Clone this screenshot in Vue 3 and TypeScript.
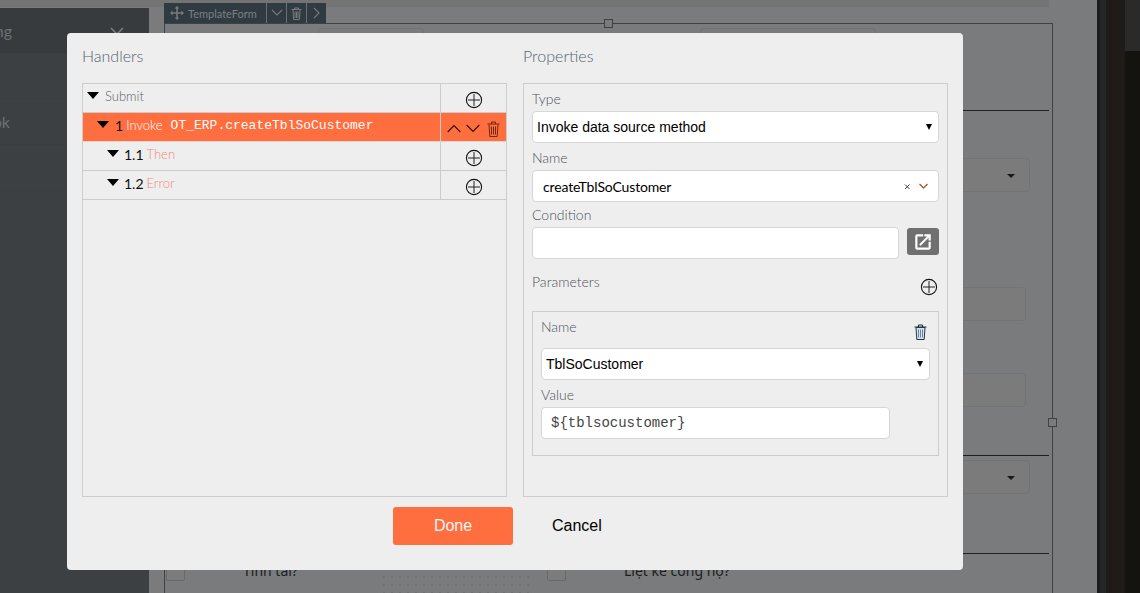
<script setup lang="ts">
interface TreeRow {
  num: string
  label: string
}
const rows: TreeRow[] = [
  { num: '1.1', label: 'Then' },
  { num: '1.2', label: 'Error' }
]
</script>

<template>
  <div class="page">
    <aside class="side">
      <div class="side-head">
        <span class="clip">Setting</span>
        <svg class="side-chev" width="14" height="9" viewBox="0 0 14 9"><path d="M1 1l6 6 6-6" fill="none" stroke="#7a7c7e" stroke-width="1.6" /></svg>
      </div>
      <div class="side-row"></div>
      <div class="side-row"><span class="clip short">Notebook</span></div>
      <div class="side-row"></div>
    </aside>

    <main class="canvas">
      <div class="band"></div>
      <div class="toolbar">
        <svg class="tool-move" width="14" height="14" viewBox="0 0 14 14"><path d="M7 0l2.4 2.6H7.800v3.600h3.600V4.600L14 7l-2.600 2.400V7.800H7.800v3.600h1.600L7 14l-2.400-2.600h1.600V7.800H2.600v1.600L0 7l2.600-2.400v1.600h3.600V2.600H4.600z" fill="#767a7c" /></svg>
        <span class="tool-name">TemplateForm</span>
        <span class="tool-btn"><svg width="12" height="8" viewBox="0 0 12 8"><path d="M1 1l5 5 5-5" fill="none" stroke="#777b7e" stroke-width="1.1" /></svg></span>
        <span class="tool-btn"><svg width="11" height="13" viewBox="0 0 11 13"><path d="M.5 2.500h10M3.500 2.500V1h4v1.500M2 3l.6 9.500h5.800L9 3M4 4.500v6.500M5.500 4.500v6.500M7 4.500v6.500" fill="none" stroke="#777b7e" /></svg></span>
        <span class="tool-btn"><svg width="8" height="12" viewBox="0 0 8 12"><path d="M1 1l5 5-5 5" fill="none" stroke="#777b7e" stroke-width="1.1" /></svg></span>
      </div>
      <div class="frame">
        <span class="handle handle-top"></span>
        <span class="handle handle-right"></span>
        <div class="top-fields">
          <span class="ghost-top first"></span>
          <span class="ghost-top second"></span>
        </div>
        <div class="rule"></div>
        <div class="ghost select-one"><i class="ghost-caret"></i></div>
        <div class="ghost input-one"></div>
        <div class="ghost input-two"></div>
        <div class="rule rule-two"></div>
        <div class="ghost select-two"><i class="ghost-caret"></i></div>
        <div class="rule rule-three"></div>
        <div class="checks">
          <span class="box"></span>
          <span class="check-text first-text">Tính tải?</span>
          <span class="dots"></span>
          <span class="box"></span>
          <span class="check-text">Liệt kê công nợ?</span>
        </div>
      </div>
    </main>

    <aside class="rail">
      <div class="rail-a"></div>
      <div class="rail-b"></div>
      <div class="rail-c"></div>
      <div class="rail-d"><div class="rail-top"></div></div>
    </aside>

    <div class="overlay">
      <section class="modal">
        <div class="columns">
          <div class="column">
            <h2 class="title">Handlers</h2>
            <div class="panel tree">
              <div class="tree-row">
                <div class="tree-main tree-root">
                  <i class="caret"></i>
                  <span class="muted">Submit</span>
                </div>
                <div class="tree-side">
                  <svg class="plus" width="18" height="18" viewBox="0 0 18 18"><circle cx="9" cy="9" r="7.600" fill="none" stroke="#111" stroke-width="1.100" /><path d="M3 9h12M9 3v12" stroke="#222" stroke-width="1" /></svg>
                </div>
              </div>
              <div class="tree-row active">
                <div class="tree-main tree-first">
                  <i class="caret"></i>
                  <span class="num">1</span>
                  <span class="invoke">Invoke</span>
                  <span class="code">OT_ERP.createTblSoCustomer</span>
                </div>
                <div class="tree-side actions">
                  <svg width="14" height="9" viewBox="0 0 14 9"><path d="M.7 8l6.300-6.500L13.300 8" fill="none" stroke="#2a1208" stroke-width="1.100" /></svg>
                  <svg width="14" height="9" viewBox="0 0 14 9"><path d="M.7 1l6.300 6.500L13.300 1" fill="none" stroke="#2a1208" stroke-width="1.100" /></svg>
                  <svg class="row-trash" width="13" height="16" viewBox="0 0 13 16"><path d="M.5 3h12M4.500 3V1h4v2M2 3.500l.8 12h7.400l.8-12M4.500 5.500v8M6.500 5.500v8M8.500 5.500v8" fill="none" stroke="#6d2810" stroke-width="1" /></svg>
                </div>
              </div>
              <div v-for="row in rows" :key="row.num" class="tree-row child">
                <div class="tree-main tree-child">
                  <i class="caret"></i>
                  <span class="num">{{ row.num }}</span>
                  <span class="branch">{{ row.label }}</span>
                </div>
                <div class="tree-side">
                  <svg class="plus" width="18" height="18" viewBox="0 0 18 18"><circle cx="9" cy="9" r="7.600" fill="none" stroke="#111" stroke-width="1.100" /><path d="M3 9h12M9 3v12" stroke="#222" stroke-width="1" /></svg>
                </div>
              </div>
            </div>
          </div>

          <div class="column">
            <h2 class="title">Properties</h2>
            <div class="panel props">
              <label class="label label-type">Type</label>
              <div class="control select">Invoke data source method<i class="mini-caret"></i></div>
              <label class="label label-name">Name</label>
              <div class="control combo">
                <span class="combo-text">createTblSoCustomer</span>
                <svg width="7" height="7" viewBox="0 0 7 7"><path d="M1 1.500l4.500 4.500M5.500 1.500L1 6" stroke="#444" stroke-width="1" /></svg>
                <svg width="9" height="6" viewBox="0 0 9 6"><path d="M.5 1l4 4 4-4" fill="none" stroke="#a0481a" stroke-width="1.100" /></svg>
              </div>
              <label class="label label-cond">Condition</label>
              <div class="condition">
                <div class="control blank"></div>
                <button class="open" type="button" aria-label="Open">
                  <svg width="20" height="20" viewBox="0 0 24 24"><path d="M19 19H5V5h7V3H5a2 2 0 0 0-2 2v14a2 2 0 0 0 2 2h14c1.100 0 2-.9 2-2v-7h-2v7zM14 3v2h3.590l-9.830 9.830 1.410 1.410L19 6.410V10h2V3h-7z" fill="#fff" stroke="#fff" stroke-width=".6" /></svg>
                </button>
              </div>
              <div class="params-head">
                <label class="label">Parameters</label>
                <svg class="plus" width="18" height="18" viewBox="0 0 18 18"><circle cx="9" cy="9" r="7.600" fill="none" stroke="#111" stroke-width="1.100" /><path d="M3 9h12M9 3v12" stroke="#222" stroke-width="1" /></svg>
              </div>
              <div class="param">
                <div class="param-head">
                  <label class="label">Name</label>
                  <svg width="13" height="16" viewBox="0 0 13 16"><path d="M.5 3h12" stroke="#1c2a3a" stroke-width="1" fill="none" /><path d="M4.500 3V1h4v2" stroke="#222" fill="none" /><path d="M2 3.500l.8 12h7.400l.8-12z" fill="#d5e2ee" stroke="#26384a" /><path d="M4.500 5.500v8M6.500 5.500v8M8.500 5.500v8" stroke="#6a86a0" /></svg>
                </div>
                <div class="control select">TblSoCustomer<i class="mini-caret"></i></div>
                <label class="label label-value">Value</label>
                <div class="control value">${tblsocustomer}</div>
              </div>
            </div>
          </div>
        </div>
        <footer class="footer">
          <button class="done" type="button">Done</button>
          <button class="cancel" type="button">Cancel</button>
        </footer>
      </section>
    </div>
  </div>
</template>

<style>
html,
body {
  margin: 0;
  background: #7a7b7d;
}
</style>

<style scoped>
.page {
  position: relative;
  display: flex;
  width: 1140px;
  height: 593px;
  overflow: hidden;
  background: #7a7b7d;
  font-family: Lato, "Liberation Sans", sans-serif;
}

/* ---- dimmed page behind the dialog ---- */
.side {
  flex: 0 0 149px;
  margin-top: 8px;
  background: #3c4043;
}
.side-head {
  display: flex;
  align-items: center;
  height: 45px;
  background: #383b3e;
  box-sizing: border-box;
}
.side-chev {
  margin: 2px 0 0 98px;
}
.side-row {
  display: flex;
  align-items: center;
  height: 46px;
  box-sizing: border-box;
  border-bottom: 1px solid #3a3e41;
}
.clip {
  display: flex;
  justify-content: flex-end;
  flex: 0 0 12px;
  width: 12px;
  overflow: hidden;
  white-space: nowrap;
  font-size: 16px;
  color: #6e7072;
}
.clip.short {
  flex-basis: 10px;
  width: 10px;
}
.canvas {
  position: relative;
  flex: 0 0 948px;
  display: flex;
  flex-direction: column;
}
.band {
  position: absolute;
  top: 0;
  left: -149px;
  width: 1049px;
  height: 7px;
  background: #747474;
}
.toolbar {
  position: relative;
  display: flex;
  align-items: center;
  align-self: flex-start;
  height: 20px;
  margin: 3px 0 0 15px;
  background: #303b41;
  box-sizing: border-box;
}
.tool-move {
  margin-left: 6px;
}
.tool-name {
  width: 78px;
  margin-left: 4px;
  font-size: 11px;
  color: #7c8083;
}
.tool-btn {
  display: flex;
  align-items: center;
  justify-content: center;
  width: 20px;
  height: 20px;
  box-sizing: border-box;
  border-left: 1px solid #6b7073;
}
.frame {
  position: relative;
  flex: 1;
  width: 889px;
  margin-left: 15px;
  box-sizing: border-box;
  border: 1px solid #3c4347;
  border-width: 1px 1px 0;
}
.handle {
  position: absolute;
  width: 9px;
  height: 9px;
  box-sizing: border-box;
  border: 1px solid #3c4347;
  background: #7a7b7d;
}
.handle-top {
  top: -5px;
  left: 439px;
}
.handle-right {
  top: 394px;
  right: -5px;
}
.top-fields {
  display: flex;
  height: 86px;
  padding: 4px 0 0 153px;
  box-sizing: border-box;
}
.ghost-top {
  height: 30px;
  box-sizing: border-box;
  border: 1px solid #707173;
  border-radius: 4px;
}
.ghost-top.first {
  width: 106px;
}
.ghost-top.second {
  width: 176px;
  margin-left: 276px;
}
.rule {
  width: 884px;
  height: 1px;
  background: #1d1f20;
}
.ghost {
  position: relative;
  height: 34px;
  box-sizing: border-box;
  border: 1px solid #727375;
  border-radius: 4px;
  background: #7b7b7b;
}
.select-one {
  width: 865px;
  margin-top: 47px;
}
.input-one {
  width: 861px;
  margin-top: 95px;
}
.input-two {
  width: 861px;
  margin-top: 52px;
}
.rule-two {
  margin-top: 48px;
}
.select-two {
  width: 865px;
  margin-top: 4px;
}
.rule-three {
  margin-top: 59px;
}
.ghost-caret {
  position: absolute;
  top: 15px;
  right: 14px;
  border: 4px solid transparent;
  border-top-color: #17191b;
  border-bottom: 0;
}
.checks {
  display: flex;
  align-items: flex-start;
  padding: 8px 0 0 1px;
  height: 40px;
  box-sizing: border-box;
}
.box {
  flex: 0 0 19px;
  height: 19px;
  box-sizing: border-box;
  border: 1px solid #68696b;
  border-radius: 2px;
  background: #7c7c7c;
}
.check-text {
  margin-left: 58px;
  margin-top: -1px;
  font: 14px "Noto Sans", "Open Sans", sans-serif;
  color: #1c1e20;
  white-space: nowrap;
}
.first-text {
  width: 137px;
}
.dots {
  flex: 0 0 152px;
  height: 40px;
  margin: 3px 15px 0 0;
  background-image: radial-gradient(circle, #707173 1px, transparent 1.2px);
  background-size: 8px 8px;
}
.rail {
  flex: 1;
  display: flex;
}
.rail-a {
  flex: 0 0 3px;
  background: #1c1c1c;
}
.rail-b {
  flex: 0 0 6px;
  background: #252727;
}
.rail-c {
  flex: 0 0 19px;
  background: #1e1b19;
}
.rail-d {
  flex: 1;
  background: #141310;
}
.rail-top {
  height: 51px;
  background: #2a2a2a;
}

/* ---- dialog ---- */
.overlay {
  position: absolute;
  inset: 0;
  padding: 33px 0 0 67px;
}
.modal {
  display: flex;
  flex-direction: column;
  width: 896px;
  height: 537px;
  padding: 0 15px;
  box-sizing: border-box;
  border-radius: 4px;
  background: #eeeeee;
}
.columns {
  display: flex;
  gap: 16px;
}
.column {
  flex: 0 0 425px;
  display: flex;
  flex-direction: column;
}
.title {
  height: 50px;
  margin: 0;
  padding-top: 13px;
  box-sizing: border-box;
  font-size: 16px;
  font-weight: 300;
  line-height: 20px;
  color: #56636f;
}
.panel {
  height: 414px;
  box-sizing: border-box;
  border: 1px solid #cccccc;
}

/* tree */
.tree-row {
  display: flex;
  height: 29px;
  box-sizing: border-box;
  border-bottom: 1px solid #cccccc;
}
.tree-row.active {
  border-bottom: 1px solid #d8d8d8;
  background: #ff6e3f;
}
.tree-main {
  flex: 0 0 358px;
  display: flex;
  align-items: center;
  padding-bottom: 4px;
  box-sizing: border-box;
  border-right: 1px solid #cccccc;
}
.tree-root {
  padding-left: 4px;
}
.tree-first {
  padding-left: 14px;
}
.tree-child {
  padding-left: 24px;
}
.tree-child .caret {
  margin-right: 5px;
}
.tree-side {
  flex: 1;
  display: flex;
  align-items: center;
  justify-content: center;
  padding-top: 4px;
  box-sizing: border-box;
}
.actions {
  gap: 5px;
  justify-content: flex-start;
  padding: 3px 0 0 6px;
}
.row-trash {
  margin-left: 2px;
}
.caret {
  flex: none;
  margin: -1px 6px 0 0;
  border-style: solid;
  border-width: 7px 6.500px 0;
  border-color: #000 transparent transparent;
}
.muted {
  font-size: 13px;
  font-weight: 300;
  color: #5d6269;
}
.num {
  font-size: 14px;
  color: #111;
}
.invoke {
  margin-left: 3px;
  font-size: 13px;
  font-weight: 300;
  color: #fff;
}
.code {
  margin: 1px 0 0 8px;
  font: 13px "Liberation Mono", monospace;
  color: #fff;
}
.branch {
  margin-left: 3px;
  font-size: 13px;
  font-weight: 300;
  color: #f5897a;
}

/* properties */
.props {
  padding: 6px 8px;
}
.label {
  display: block;
  font-size: 14px;
  font-weight: 300;
  line-height: 17px;
  color: #4d545b;
}
.label-type {
  margin-bottom: 4px;
}
.label-name {
  margin: 6px 0 4px;
}
.label-cond {
  margin: 4px 0 4px;
}
.control {
  position: relative;
  display: flex;
  align-items: center;
  height: 32px;
  box-sizing: border-box;
  padding: 0 4px;
  border: 1px solid #d6d6d6;
  border-radius: 4px;
  background: #fff;
  font: 14px "Liberation Sans", sans-serif;
  color: #000;
}
.mini-caret {
  position: absolute;
  top: 12px;
  right: 6px;
  border-style: solid;
  border-width: 6px 3.500px 0;
  border-color: #000 transparent transparent;
}
.combo {
  gap: 8px;
  padding: 0 10px;
}
.combo-text {
  flex: 1;
  font: 14px Lato, sans-serif;
  letter-spacing: -0.15px;
}
.condition {
  display: flex;
  align-items: flex-start;
  gap: 8px;
}
.blank {
  width: 367px;
}
.open {
  display: flex;
  align-items: center;
  justify-content: center;
  width: 32px;
  height: 27px;
  margin-top: 1px;
  padding: 0;
  border: 0;
  border-radius: 3px;
  background: #707070;
}
.params-head {
  display: flex;
  align-items: flex-start;
  justify-content: space-between;
  height: 52px;
  padding: 14px 1px 0 0;
  box-sizing: border-box;
}
.params-head .plus {
  margin-top: 5px;
}
.param {
  height: 145px;
  padding: 6px 8px;
  box-sizing: border-box;
  border: 1px solid #cccccc;
}
.param-head {
  display: flex;
  justify-content: space-between;
  height: 30px;
  box-sizing: border-box;
}
.param-head svg {
  margin: 6px 3px 0 0;
}
.label-value {
  margin: 6px 0 4px;
}
.value {
  width: 349px;
  padding-left: 9px;
  font: 14px "Liberation Mono", monospace;
  color: #444;
}

/* footer */
.footer {
  display: flex;
  align-items: flex-start;
  padding: 10px 0 0 311px;
}
.done {
  width: 120px;
  height: 38px;
  border: 0;
  border-radius: 3px;
  background: #ff6e3f;
  font: 16px "Liberation Sans", sans-serif;
  color: #f7f7f7;
}
.cancel {
  height: 38px;
  margin-left: 39px;
  padding: 0;
  border: 0;
  background: transparent;
  font: 16px "Liberation Sans", sans-serif;
  color: #000;
}
</style>
